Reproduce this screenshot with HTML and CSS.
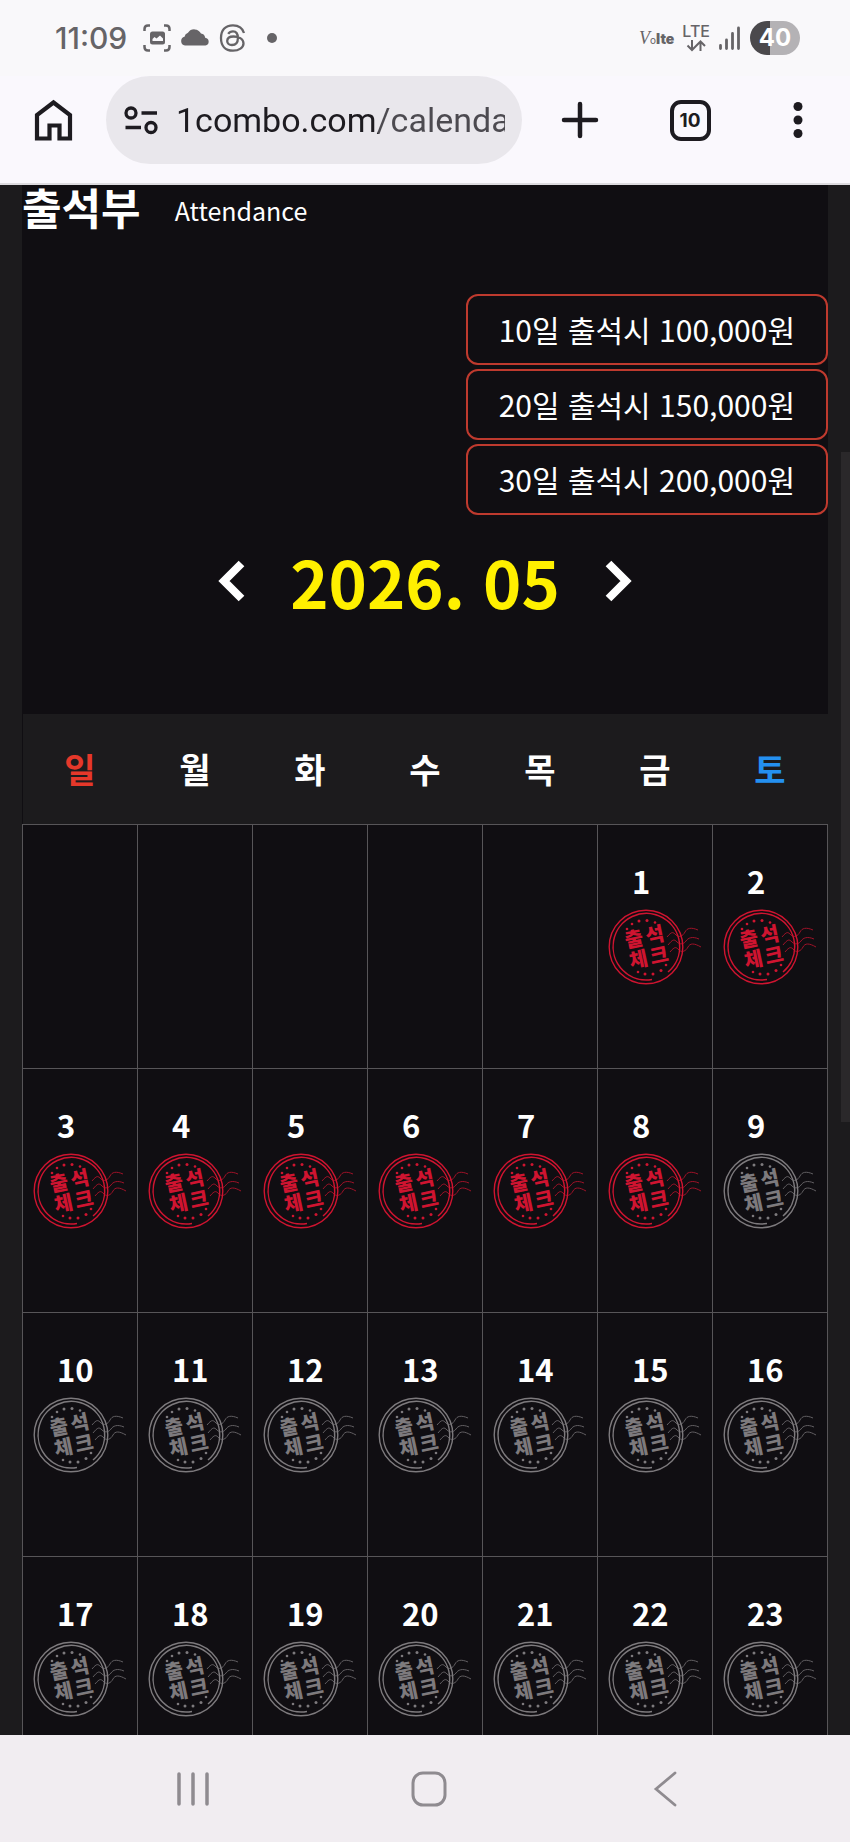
FILE: index.html
```html
<!DOCTYPE html>
<html lang="ko">
<head>
    <meta charset="UTF-8">
    <meta name="viewport" content="width=device-width, initial-scale=1.0">
    <title>출석부</title>
    <link rel="stylesheet" href="styles.css">
</head>
<body>
    <!-- stamp shapes, shared by every day cell -->
    <svg class="defs" width="0" height="0" aria-hidden="true">
        <symbol id="stamp" viewBox="0 0 94 76">
            <g fill="none" stroke="currentColor">
                <circle cx="38" cy="38" r="36.8" stroke-width="1.4"/>
                <path d="M44 70.500A33.300 33.300 0 1 1 60 63" stroke-width="1.500"/>
                <g stroke-width="1" opacity=".75">
                    <path d="M59 28c5-6 6-5 9-2s7 1 9-3 6-5 13-2"/>
                    <path d="M60 36c5-6 6-6 9-3s7 2 9-1 6-5 13-2"/>
                    <path d="M62 43c5-6 6-5 9-2s7 1 9-3 6-4 13 0"/>
                </g>
            </g>
            <g fill="currentColor">
                <circle cx="19" cy="20" r="1.300"/><circle cx="24" cy="15" r="1.300"/><circle cx="31" cy="12" r="1.500"/>
                <circle cx="39" cy="11.500" r="1.500"/><circle cx="47" cy="13.500" r="1.300"/>
                <circle cx="30" cy="63" r="1.300"/><circle cx="37" cy="65" r="1.500"/><circle cx="45" cy="65" r="1.500"/>
                <circle cx="53" cy="61.500" r="1.500"/><circle cx="58" cy="56" r="1.300"/>
                <g class="stamp-text" transform="rotate(-12 38 38)">
                    <text x="28" y="35">출</text>
                    <text x="49" y="35">석</text>
                    <text x="28" y="56">체</text>
                    <text x="49" y="56">크</text>
                </g>
            </g>
        </symbol>
    </svg>

    <div class="status-bar">
        <span class="time">11:09</span>
        <svg width="28" height="28" viewBox="0 0 28 28">
            <path d="M1.500 7V5q0-3.500 3.500-3.500h2M21 1.500h2q3.500 0 3.500 3.500v2M26.500 21v2q0 3.500-3.500 3.500h-2M7 26.500H5q-3.500 0-3.500-3.500v-2" fill="none" stroke="currentColor" stroke-width="2.500"/>
            <rect x="7" y="7.500" width="15" height="13" rx="2.500" fill="currentColor"/>
            <path d="M9.500 17v-2l2-2 2 1.500 3.500-3 3 3V17z" fill="#f9f8fb"/>
        </svg>
        <svg width="28" height="28" viewBox="0 0 28 28">
            <path d="M4 21.500a4.500 4.500 0 0 1-.5-8.800A5 5 0 0 1 7 8.800 7.500 7.500 0 0 1 20 9.500a5 5 0 0 1 4.200 4.300A3.900 3.900 0 0 1 24.500 21.500z" fill="currentColor"/>
        </svg>
        <svg width="28" height="28" viewBox="0 0 28 28">
            <path d="M25 9C23.500 3.800 19.500 1.300 14 1.300 6 1.300 2 6.500 2 14s4 12.700 12 12.700c6 0 10.500-3.200 10.500-7.200 0-5-5-7-10-7-4 0-6.300 1.800-6.300 4.500 0 2.400 2 4 4.700 4 4 0 6-2.800 6-7 0-4.500-1.400-6.700-4.900-6.700-2.200 0-3.700.8-4.800 2.500" fill="none" stroke="currentColor" stroke-width="2.300"/>
        </svg>
        <span class="dot"></span>

        <div class="status-right">
            <span class="volte"><i>V</i><small>o</small><b>lte</b></span>
            <span class="lte">LTE
                <svg width="20" height="12" viewBox="0 0 20 12">
                    <path d="M6 0v10M1.500 5.500L6 10l4.500-4.500M14.500 11V1M10 6l4.500-4.500L19 6" fill="none" stroke="currentColor" stroke-width="2"/>
                </svg>
            </span>
            <svg width="24" height="24" viewBox="0 0 24 24">
                <path d="M2.500 19.500v3M8.500 14v8.500M14.500 7.500v15M20.500 2v20.500" fill="none" stroke="currentColor" stroke-width="2.800" stroke-linecap="round"/>
            </svg>
            <span class="battery">40</span>
        </div>
    </div>

    <div class="toolbar">
        <button class="home" aria-label="홈">
            <svg width="40" height="44" viewBox="0 0 40 44">
                <path d="M4 40.500V17L20.500 4.500 37 17v23.500H26.500v-13h-10v13z" fill="none" stroke="currentColor" stroke-width="4.200"/>
            </svg>
        </button>
        <div class="address">
            <svg width="36" height="30" viewBox="0 0 36 30">
                <g fill="none" stroke="currentColor" stroke-width="3.300">
                    <circle cx="8" cy="8" r="5"/><circle cx="28" cy="22.500" r="5"/>
                    <path d="M18.500 8H34M2.500 22.500H18"/>
                </g>
            </svg>
            <input type="text" value="1combo.com/calendar" aria-label="주소">
        </div>
        <button aria-label="새 탭">
            <svg width="40" height="40" viewBox="0 0 40 40">
                <path d="M20 4v32M4 20h32" stroke="currentColor" stroke-width="4.500" stroke-linecap="round"/>
            </svg>
        </button>
        <button class="tab-switch" aria-label="탭 10개"><span class="tabs">10</span></button>
        <button class="menu" aria-label="메뉴">
            <svg width="40" height="40" viewBox="0 0 40 40" fill="currentColor">
                <circle cx="20" cy="6.500" r="4.500"/><circle cx="20" cy="20" r="4.500"/><circle cx="20" cy="33.500" r="4.500"/>
            </svg>
        </button>
    </div>

    <main>
        <div class="container">
            <header>
                <h2>출석부</h2>
                <span>Attendance</span>
            </header>

            <ul class="rewards">
                <li>10일 출석시 100,000원</li>
                <li>20일 출석시 150,000원</li>
                <li>30일 출석시 200,000원</li>
            </ul>

            <div class="month">
                <button aria-label="이전 달">
                    <svg width="28" height="42" viewBox="0 0 28 42"><path d="M23.500 3.500L6 21l17.500 17.500" fill="none" stroke="currentColor" stroke-width="8"/></svg>
                </button>
                <h1>2026. 05</h1>
                <button aria-label="다음 달">
                    <svg width="28" height="42" viewBox="0 0 28 42"><path d="M4.500 3.500L22 21 4.500 38.500" fill="none" stroke="currentColor" stroke-width="8"/></svg>
                </button>
            </div>

            <table>
                <thead>
                    <tr>
                        <th class="sun">일</th>
                        <th>월</th>
                        <th>화</th>
                        <th>수</th>
                        <th>목</th>
                        <th>금</th>
                        <th class="sat">토</th>
                    </tr>
                </thead>
                <tbody id="days"></tbody>
            </table>
        </div>
        <div class="scrollbar"></div>
    </main>

    <nav>
        <button aria-label="최근 앱">
            <svg width="36" height="36" viewBox="0 0 36 36"><path d="M4 3v30M18 3v30M32 3v30" stroke="currentColor" stroke-width="3.500" stroke-linecap="round"/></svg>
        </button>
        <button aria-label="홈 화면">
            <svg width="36" height="36" viewBox="0 0 36 36"><rect x="2" y="2" width="32" height="32" rx="10" fill="none" stroke="currentColor" stroke-width="3"/></svg>
        </button>
        <button aria-label="뒤로">
            <svg width="36" height="36" viewBox="0 0 36 36"><path d="M28 2L9 18l19 16" fill="none" stroke="currentColor" stroke-width="2.800" stroke-linecap="round"/></svg>
        </button>
    </nav>

    <script>
        const firstDay = 5;      // 2026-05-01 is a Friday
        const lastDay = 31;
        const checkedUntil = 8;

        let html = '';
        for (let i = 0; i < 42; i++) {
            const day = i - firstDay + 1;
            if (i % 7 === 0) html += '<tr>';
            if (day < 1 || day > lastDay) {
                html += '<td></td>';
            } else {
                const state = day <= checkedUntil ? 'stamp checked' : 'stamp';
                html += `<td><span class="day">${day}</span><svg class="${state}"><use href="#stamp"/></svg></td>`;
            }
            if (i % 7 === 6) html += '</tr>';
        }
        document.getElementById('days').innerHTML = html;
    </script>
</body>
</html>
```
FILE: styles.css
```css
* {
    box-sizing: border-box;
}
body {
    margin: 0;
    height: 100vh;
    display: flex;
    flex-direction: column;
    font-family: "Noto Sans CJK KR", sans-serif;
    background-color: #1c1b1d;
    color: #ffffff;
}
button {
    border: none;
    padding: 0;
    background: none;
    color: inherit;
    display: flex;
    align-items: center;
    justify-content: center;
    cursor: pointer;
}
.defs {
    position: absolute;
}

/* status bar */
.status-bar {
    flex: none;
    height: 76px;
    padding: 0 50px 0 55px;
    display: flex;
    align-items: center;
    gap: 10px;
    background-color: #f9f8fa;
    color: #666467;
    font-family: Inter, sans-serif;
}
.time {
    font-size: 30px;
    font-weight: 500;
    margin-right: 6px;
}
.dot {
    width: 10px;
    height: 10px;
    margin-left: 10px;
    border-radius: 50%;
    background-color: currentColor;
}
.status-right {
    display: flex;
    align-items: center;
    gap: 8px;
    margin-left: auto;
}
.volte {
    font-size: 14px;
}
.volte i {
    font-family: "Liberation Serif", serif;
    font-size: 18px;
}
.volte small {
    font-size: 10px;
}
.volte b {
    font-weight: 900;
}
.lte {
    display: flex;
    flex-direction: column;
    align-items: center;
    gap: 2px;
    font-size: 16px;
    line-height: 14px;
    font-weight: 500;
}
.battery {
    width: 50px;
    height: 34px;
    border-radius: 17px;
    background: linear-gradient(to right, #4b494c 40%, #b4b2b5 40%);
    color: #ffffff;
    font-size: 24px;
    line-height: 34px;
    font-weight: 700;
    text-align: center;
}

/* browser toolbar */
.toolbar {
    flex: none;
    height: 109px;
    padding-bottom: 19px;
    display: flex;
    background-color: #faf8fd;
    border-bottom: 2px solid #dddbdf;
    color: #1d1b20;
}
.toolbar button {
    width: 108px;
}
.toolbar .home {
    width: 106px;
}
.toolbar .tab-switch {
    width: 112px;
}
.toolbar .menu {
    width: 104px;
}
.address {
    flex: 1;
    min-width: 0;
    margin-right: 4px;
    padding: 0 17px;
    display: flex;
    align-items: center;
    gap: 17px;
    border-radius: 44px;
    background-color: #e9e7ec;
}
.address svg {
    flex: none;
}
.address input {
    flex: 1;
    min-width: 0;
    padding: 0;
    border: none;
    outline: none;
    font-family: Roboto, sans-serif;
    font-size: 34px;
    /* host dark, path grey */
    background: linear-gradient(to right, #1d1b20 202px, #4c4a50 202px);
    background-clip: text;
    color: transparent;
}
.tabs {
    width: 41px;
    height: 41px;
    border: 4px solid currentColor;
    border-radius: 11px;
    font-family: Inter, sans-serif;
    font-size: 19px;
    line-height: 33px;
    font-weight: 700;
}

/* page */
main {
    position: relative;
    flex: 1;
    min-height: 0;
    overflow: hidden;
}
.container {
    margin: 0 22px;
    background-color: #100e12;
}
header {
    height: 42px;
    display: flex;
    align-items: center;
    gap: 34px;
    line-height: 42px;
}
header h2 {
    margin: 0;
    font-size: 43px;
    font-weight: 700;
}
header span {
    font-size: 25px;
    margin-top: 8px;
}
.rewards {
    margin: 0;
    padding: 67px 0 0;
    list-style: none;
    display: flex;
    flex-direction: column;
    align-items: flex-end;
    gap: 4px;
}
.rewards li {
    padding: 0 31px;
    border: 2px solid #bf3a2e;
    border-radius: 12px;
    font-size: 30px;
    line-height: 67px;
}
.month {
    height: 199px;
    padding-bottom: 68px;
    display: flex;
    align-items: center;
    justify-content: center;
    gap: 44px;
}
.month h1 {
    margin: 0;
    color: #fff000;
    font-size: 65px;
    font-weight: 700;
    line-height: 80px;
}
table {
    width: 100%;
    table-layout: fixed;
    border-collapse: collapse;
}
th {
    height: 110px;
    padding: 0;
    background-color: #1c1b1d;
    font-size: 34px;
    font-weight: 700;
}
.sun {
    color: #e5382a;
}
.sat {
    color: #2490f0;
}
td {
    height: 244px;
    padding: 28px 0 0 10px;
    border: 1px solid #575558;
    vertical-align: top;
}
.day {
    display: block;
    padding-left: 24px;
    font-size: 31px;
    font-weight: 700;
    line-height: 56px;
}
.stamp {
    display: block;
    width: 94px;
    height: 76px;
    color: #7d7a7d;
}
.stamp.checked {
    color: #cf1430;
}
.stamp-text {
    font-size: 20px;
    font-weight: 900;
    text-anchor: middle;
}
.scrollbar {
    position: absolute;
    top: 267px;
    right: 0;
    width: 9px;
    height: 670px;
    background-color: #2a282a;
}

/* system navigation */
nav {
    flex: none;
    height: 107px;
    padding-left: 8px;
    display: flex;
    justify-content: center;
    background-color: #f1edf1;
    color: #8f8b90;
}
nav button {
    width: 28%;
}
```
